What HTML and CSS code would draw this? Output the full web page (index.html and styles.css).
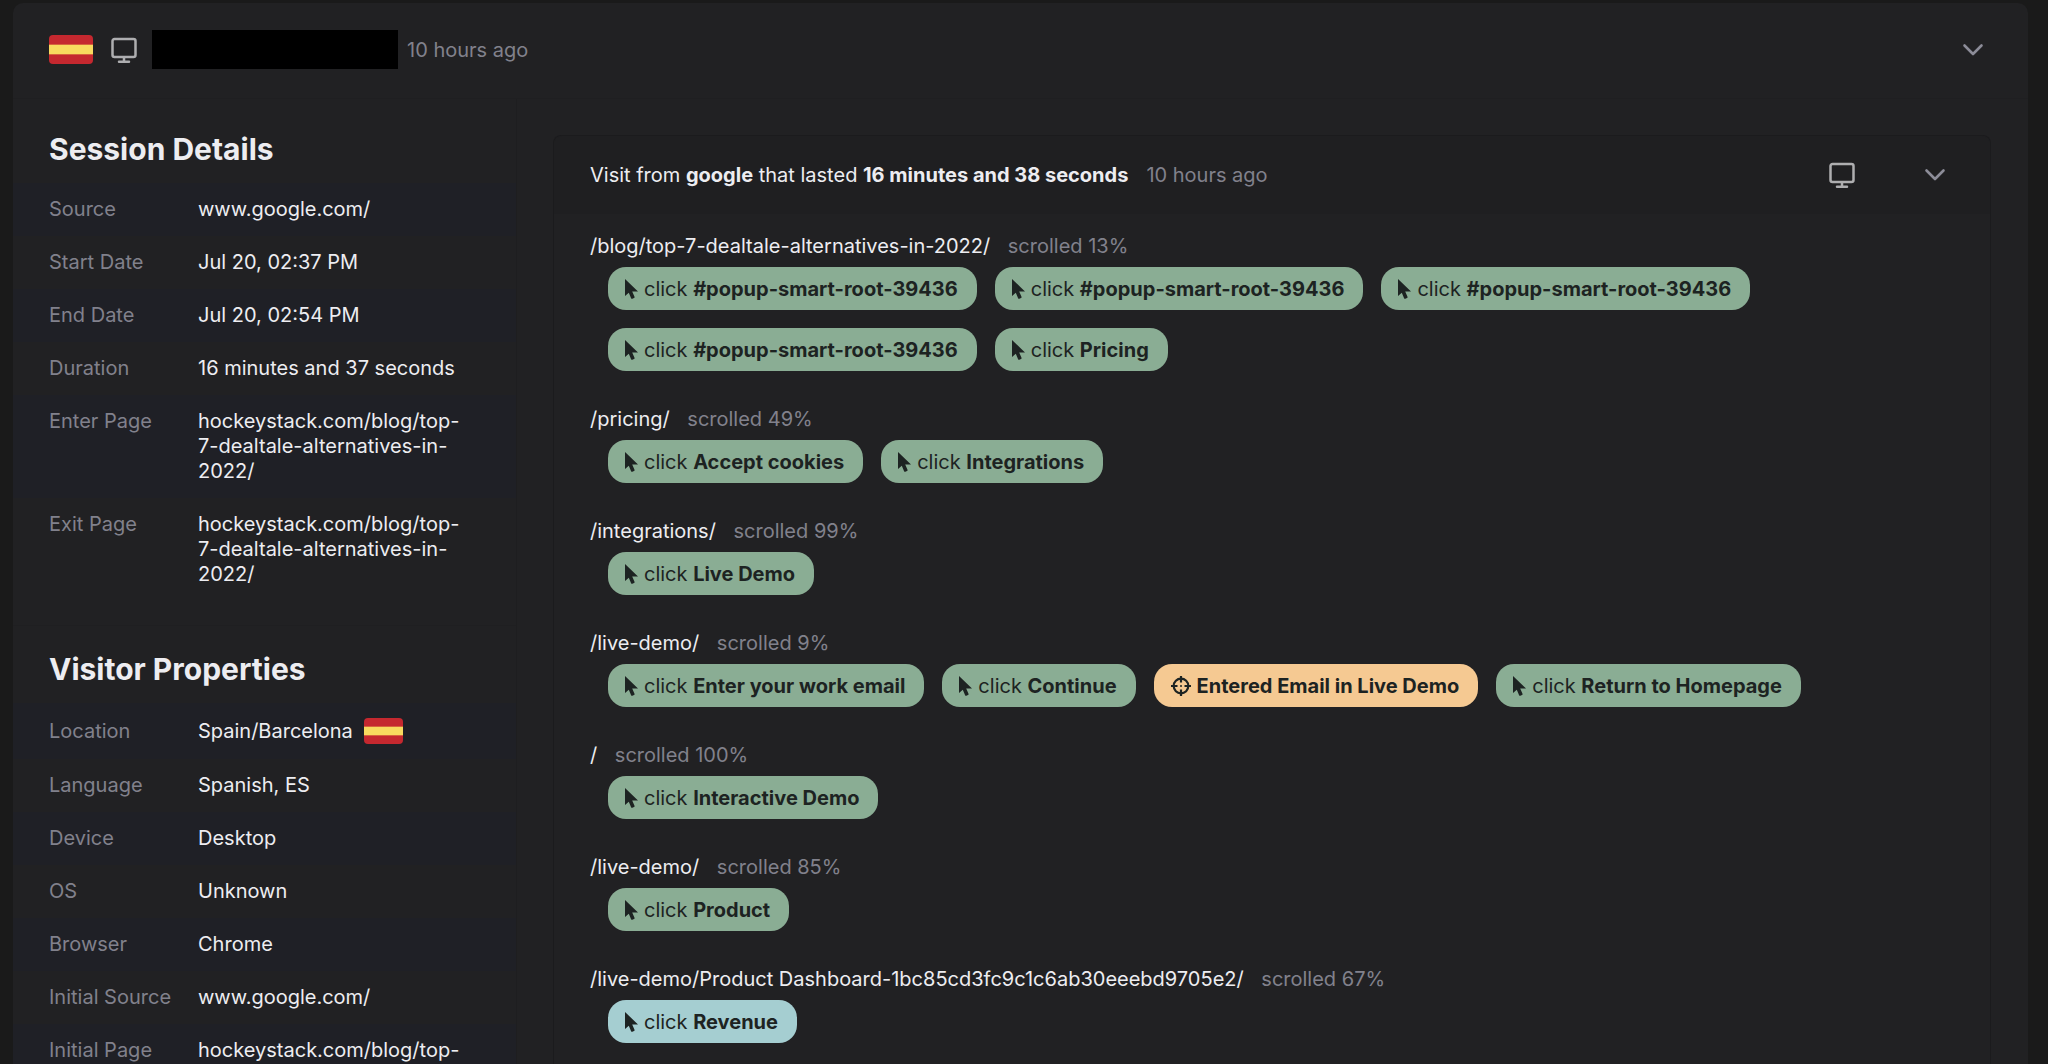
FILE: index.html
```html
<!DOCTYPE html>
<html lang="en">
<head>
<meta charset="utf-8">
<meta name="viewport" content="width=device-width, initial-scale=1">
<title>Visitor sessions</title>
<link rel="stylesheet" href="styles.css">
</head>
<body>
<svg class="sprite" aria-hidden="true">
  <symbol id="flag-es" viewBox="0 0 44 30" preserveAspectRatio="none">
    <rect width="44" height="30" fill="#c5282f"/>
    <rect y="10" width="44" height="10" fill="#f8da5f"/>
  </symbol>
  <symbol id="monitor" viewBox="0 0 28 28">
    <path d="M4.500 3h19a2 2 0 0 1 2 2v14a2 2 0 0 1-2 2h-19a2 2 0 0 1-2-2V5a2 2 0 0 1 2-2zM14 21v4.500M9 25.700h10" fill="none" stroke="currentColor" stroke-width="2.500" stroke-linecap="round" stroke-linejoin="round"/>
  </symbol>
  <symbol id="chevron" viewBox="0 0 22 14">
    <path d="M2.500 2.500l8.500 8.500 8.500-8.500" fill="none" stroke="currentColor" stroke-width="2.600" stroke-linecap="round" stroke-linejoin="round"/>
  </symbol>
  <symbol id="cursor" viewBox="0 0 13 20">
    <path d="M0 0v17l3.800-3.200 2.300 5.400q.4.900 1.300.5l1.600-.7q.8-.4.500-1.200l-2.300-5.300H13z" fill="currentColor"/>
  </symbol>
  <symbol id="target" viewBox="0 0 20 20">
    <circle cx="10" cy="10" r="7.300" fill="none" stroke="currentColor" stroke-width="2.200"/>
    <path d="M10 0v6.500M10 13.500v6.500M0 10h6.500M13.500 10h6.500" fill="none" stroke="currentColor" stroke-width="2.200"/>
    <circle cx="10" cy="10" r="1" fill="currentColor"/>
  </symbol>
</svg>
<main class="feed">
  <article class="session">
    <header class="session-head">
      <svg class="flag" role="img" aria-label="Spain"><use href="#flag-es"/></svg>
      <svg class="monitor" role="img" aria-label="Desktop"><use href="#monitor"/></svg>
      <span class="redacted"></span>
      <time class="muted">10 hours ago</time>
      <button class="toggle" type="button" aria-label="Collapse session"><svg class="chevron"><use href="#chevron"/></svg></button>
    </header>
    <div class="session-body">
      <aside class="sidebar">
        <section class="details">
          <h2>Session Details</h2>
          <table>
            <tr><th scope="row">Source</th><td>www.google.com/</td></tr>
            <tr><th scope="row">Start Date</th><td>Jul 20, 02:37 PM</td></tr>
            <tr><th scope="row">End Date</th><td>Jul 20, 02:54 PM</td></tr>
            <tr><th scope="row">Duration</th><td>16 minutes and 37 seconds</td></tr>
            <tr><th scope="row">Enter Page</th><td>hockeystack.com/blog/top-7-dealtale-alternatives-in-2022/</td></tr>
            <tr><th scope="row">Exit Page</th><td>hockeystack.com/blog/top-7-dealtale-alternatives-in-2022/</td></tr>
          </table>
        </section>
        <section class="details">
          <h2>Visitor Properties</h2>
          <table>
            <tr><th scope="row">Location</th><td><span class="place">Spain/Barcelona <svg class="flag flag-small" role="img" aria-label="Spain"><use href="#flag-es"/></svg></span></td></tr>
            <tr><th scope="row">Language</th><td>Spanish, ES</td></tr>
            <tr><th scope="row">Device</th><td>Desktop</td></tr>
            <tr><th scope="row">OS</th><td>Unknown</td></tr>
            <tr><th scope="row">Browser</th><td>Chrome</td></tr>
            <tr><th scope="row">Initial Source</th><td>www.google.com/</td></tr>
            <tr><th scope="row">Initial Page</th><td>hockeystack.com/blog/top-7-dealtale-alternatives-in-2022/</td></tr>
          </table>
        </section>
      </aside>
      <section class="visit">
        <header class="visit-head">
          <p class="visit-title">Visit from <b>google</b> that lasted <b>16 minutes and 38 seconds</b></p>
          <time class="muted">10 hours ago</time>
          <svg class="monitor" role="img" aria-label="Desktop"><use href="#monitor"/></svg>
          <button class="toggle" type="button" aria-label="Collapse visit"><svg class="chevron"><use href="#chevron"/></svg></button>
        </header>
        <ol class="pages">
          <li>
            <p class="page">/blog/top-7-dealtale-alternatives-in-2022/ <span class="muted">scrolled 13%</span></p>
            <div class="chips">
              <span class="chip"><svg class="cursor"><use href="#cursor"/></svg><span>click <b>#popup-smart-root-39436</b></span></span>
              <span class="chip"><svg class="cursor"><use href="#cursor"/></svg><span>click <b>#popup-smart-root-39436</b></span></span>
              <span class="chip"><svg class="cursor"><use href="#cursor"/></svg><span>click <b>#popup-smart-root-39436</b></span></span>
              <span class="chip"><svg class="cursor"><use href="#cursor"/></svg><span>click <b>#popup-smart-root-39436</b></span></span>
              <span class="chip"><svg class="cursor"><use href="#cursor"/></svg><span>click <b>Pricing</b></span></span>
            </div>
          </li>
          <li>
            <p class="page">/pricing/ <span class="muted">scrolled 49%</span></p>
            <div class="chips">
              <span class="chip"><svg class="cursor"><use href="#cursor"/></svg><span>click <b>Accept cookies</b></span></span>
              <span class="chip"><svg class="cursor"><use href="#cursor"/></svg><span>click <b>Integrations</b></span></span>
            </div>
          </li>
          <li>
            <p class="page">/integrations/ <span class="muted">scrolled 99%</span></p>
            <div class="chips">
              <span class="chip"><svg class="cursor"><use href="#cursor"/></svg><span>click <b>Live Demo</b></span></span>
            </div>
          </li>
          <li>
            <p class="page">/live-demo/ <span class="muted">scrolled 9%</span></p>
            <div class="chips">
              <span class="chip"><svg class="cursor"><use href="#cursor"/></svg><span>click <b>Enter your work email</b></span></span>
              <span class="chip"><svg class="cursor"><use href="#cursor"/></svg><span>click <b>Continue</b></span></span>
              <span class="chip chip-goal"><svg class="target"><use href="#target"/></svg><b>Entered Email in Live Demo</b></span>
              <span class="chip"><svg class="cursor"><use href="#cursor"/></svg><span>click <b>Return to Homepage</b></span></span>
            </div>
          </li>
          <li>
            <p class="page">/ <span class="muted">scrolled 100%</span></p>
            <div class="chips">
              <span class="chip"><svg class="cursor"><use href="#cursor"/></svg><span>click <b>Interactive Demo</b></span></span>
            </div>
          </li>
          <li>
            <p class="page">/live-demo/ <span class="muted">scrolled 85%</span></p>
            <div class="chips">
              <span class="chip"><svg class="cursor"><use href="#cursor"/></svg><span>click <b>Product</b></span></span>
            </div>
          </li>
          <li>
            <p class="page">/live-demo/Product Dashboard-1bc85cd3fc9c1c6ab30eeebd9705e2/ <span class="muted">scrolled 67%</span></p>
            <div class="chips">
              <span class="chip chip-custom"><svg class="cursor"><use href="#cursor"/></svg><span>click <b>Revenue</b></span></span>
            </div>
          </li>
        </ol>
      </section>
    </div>
  </article>
</main>
</body>
</html>
```
FILE: styles.css
```css
* {
  box-sizing: border-box;
}

body {
  margin: 0;
  background: #1a1a1a;
  color: #ededf1;
  font: 400 20px/24px Inter, "Liberation Sans", sans-serif;
}

h2,
p,
ol {
  margin: 0;
  padding: 0;
}

ol {
  list-style: none;
}

b {
  font-weight: 700;
}

.sprite {
  display: none;
}

.feed {
  height: 100vh;
  overflow-y: auto;
  scrollbar-width: none;
  padding: 3px 20px 0 13px;
}

.session {
  background: #212123;
  border-radius: 10px;
}

.session-head {
  display: flex;
  align-items: center;
  height: 96px;
  padding: 0 44px 2px 36px;
  border-bottom: 1px solid #1f1f21;
}

.flag {
  display: block;
  width: 44px;
  height: 29px;
  border-radius: 4px;
}

.flag-small {
  width: 39px;
  height: 26px;
}

.monitor {
  width: 28px;
  height: 28px;
  color: #aeaeb0;
}

.session-head .monitor {
  margin: 0 14px 0 17px;
}

.redacted {
  width: 246px;
  height: 39px;
  margin-right: 9px;
  background: #000;
}

.muted {
  color: #81818c;
}

.toggle {
  display: flex;
  margin-left: auto;
  padding: 0;
  border: 0;
  background: none;
  color: #8c8c98;
  cursor: pointer;
}

.chevron {
  width: 22px;
  height: 14px;
}

.session-body {
  display: flex;
  align-items: stretch;
}

.sidebar {
  flex: none;
  width: 504px;
  border-right: 1px solid #1e1e20;
}

.details {
  padding: 30px 0 24px;
}

.details + .details {
  padding-top: 23px;
  border-top: 1px solid #1f1f21;
}

h2 {
  padding: 0 36px;
  margin-bottom: 14px;
  font-size: 30px;
  line-height: 40px;
  font-weight: 700;
}

table {
  width: 100%;
  border-collapse: collapse;
  table-layout: fixed;
  line-height: 25px;
}

tr:nth-child(odd) {
  background: #1f2026;
}

th,
td {
  padding: 14px 0;
  vertical-align: baseline;
  text-align: left;
  font-weight: 400;
}

th {
  width: 185px;
  padding-left: 36px;
  color: #81818c;
}

td {
  padding-right: 46px;
}

.place {
  display: flex;
  align-items: center;
  gap: 11px;
  min-height: 28px;
}

.visit {
  flex: 1;
  margin: 36px 37px 0 36px;
  border: 1px solid #1b1b1d;
  border-bottom: 0;
  border-radius: 8px 8px 0 0;
}

.visit-head {
  display: flex;
  align-items: center;
  height: 78px;
  padding: 0 44px 0 36px;
  background: #1f1f21;
  border-radius: 8px 8px 0 0;
}

.visit-head .muted {
  margin-left: 18px;
}

.visit-head .monitor {
  margin-left: auto;
}

.visit-head .toggle {
  margin-left: 68px;
}

.pages {
  padding: 20px 36px 24px;
}

.pages li {
  margin-bottom: 36px;
}

.page .muted {
  margin-left: 12px;
}

.chips {
  display: flex;
  flex-wrap: wrap;
  gap: 18px;
  margin-top: 9px;
  padding: 0 18px;
}

.chip {
  display: flex;
  align-items: center;
  gap: 6px;
  height: 43px;
  padding: 0 19px 0 17px;
  border-radius: 18px;
  background: #8aad94;
  color: #1d2322;
}

.chip-goal {
  background: #f5c992;
}

.chip-custom {
  background: #a5ced1;
}

.cursor {
  width: 13px;
  height: 20px;
}

.target {
  width: 20px;
  height: 20px;
}
```
